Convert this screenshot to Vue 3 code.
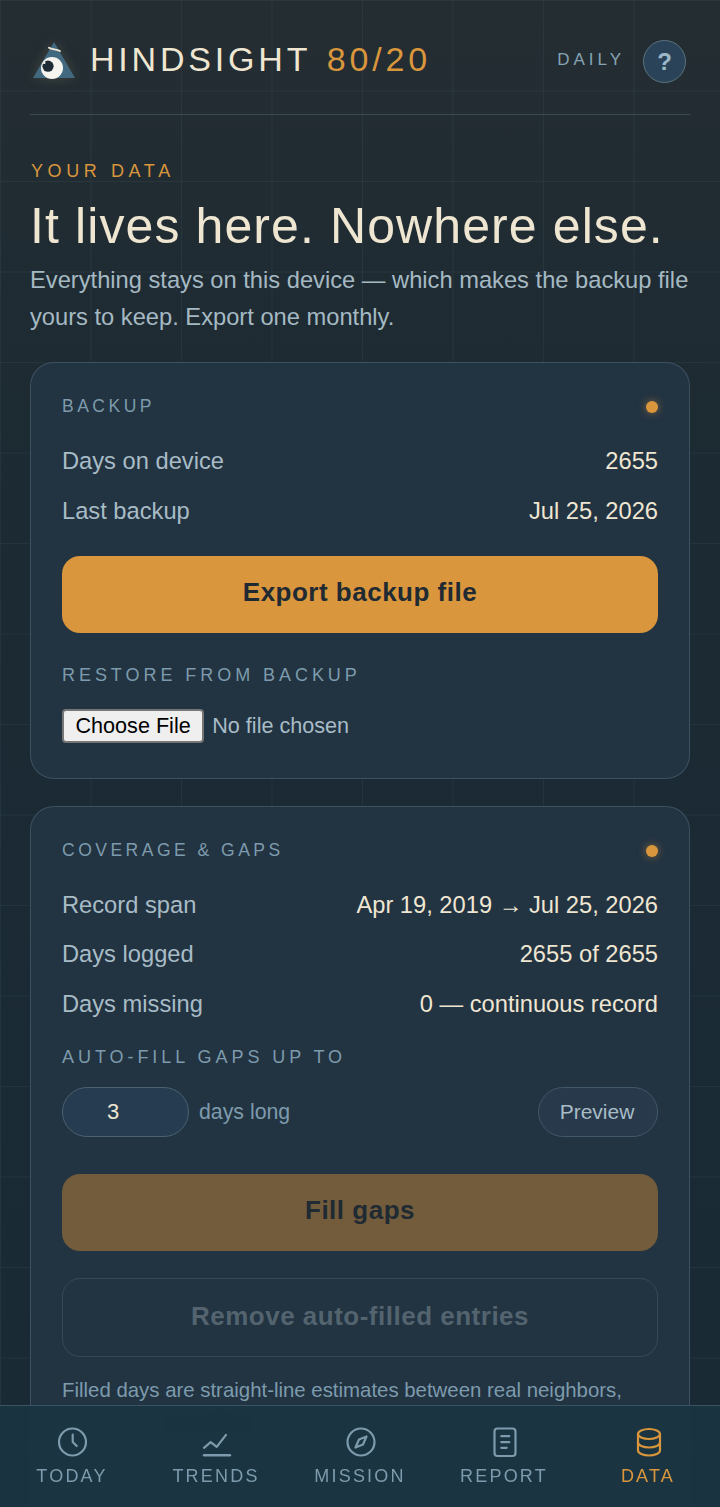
<script setup>
const navItems = [
  { label: 'TODAY', icon: 'clock' },
  { label: 'TRENDS', icon: 'trends' },
  { label: 'MISSION', icon: 'compass' },
  { label: 'REPORT', icon: 'report' },
  { label: 'DATA', icon: 'data', active: true },
]
</script>

<template>
  <div class="page">
    <header class="header">
      <div class="brand">
        <svg class="logo" width="48" height="40" viewBox="0 0 48 40">
          <path d="M24 1 L45 37 H3 Z" fill="#41697f" />
          <path d="M19 6.7 C21.5 8.8 26 8 30 10" stroke="#eee6d3" stroke-width="1.8" fill="none" stroke-linecap="round" />
          <circle cx="22" cy="27" r="11" fill="#f6f4ee" />
          <circle cx="18" cy="25.2" r="5.6" fill="#1f2c36" />
          <circle cx="14.2" cy="21.8" r="1.3" fill="#f6f4ee" />
        </svg>
        <span class="title">HINDSIGHT <em>80/20</em></span>
      </div>
      <div class="head-right">
        <span class="daily">DAILY</span>
        <span class="help">?</span>
      </div>
    </header>

    <section class="intro">
      <div class="eyebrow">YOUR DATA</div>
      <h1>It lives here. Nowhere else.</h1>
      <p>Everything stays on this device — which makes the backup file yours to keep. Export one monthly.</p>
    </section>

    <section class="card first">
      <div class="card-head"><span class="card-title">BACKUP</span><i class="dot"></i></div>
      <div class="row r1"><span>Days on device</span><b>2655</b></div>
      <div class="row r2"><span>Last backup</span><b>Jul 25, 2026</b></div>
      <button class="btn primary">Export backup file</button>
      <div class="sub-label restore">RESTORE FROM BACKUP</div>
      <input class="file" type="file" />
    </section>

    <section class="card second">
      <div class="card-head"><span class="card-title">COVERAGE &amp; GAPS</span><i class="dot"></i></div>
      <div class="row r1"><span>Record span</span><b>Apr 19, 2019 → Jul 25, 2026</b></div>
      <div class="row r3"><span>Days logged</span><b>2655 of 2655</b></div>
      <div class="row r2"><span>Days missing</span><b>0 — continuous record</b></div>
      <div class="sub-label autofill">AUTO-FILL GAPS UP TO</div>
      <div class="fill-row">
        <input class="num" type="text" value="3" />
        <span class="days">days long</span>
        <button class="preview">Preview</button>
      </div>
      <button class="btn primary dim">Fill gaps</button>
      <button class="btn ghost">Remove auto-filled entries</button>
      <p class="note">Filled days are straight-line estimates between real neighbors, <span class="note-soft">marked as </span><span class="note-dark">auto-filled</span></p>
    </section>

    <nav class="nav">
      <div v-for="item in navItems" :key="item.label" class="nav-item" :class="{ active: item.active }">
        <svg width="32" height="32" viewBox="0 0 32 32" fill="none" stroke="currentColor" stroke-width="2.2" stroke-linecap="round" stroke-linejoin="round">
          <template v-if="item.icon === 'clock'">
            <circle cx="16.5" cy="16" r="13.5" />
            <path d="M16.7 8.5 V16 L20.7 20" />
          </template>
          <template v-else-if="item.icon === 'trends'">
            <path d="M4 21.8 L10.7 16.2 L16.7 20.8 L26 8.8" />
            <path d="M4 29.2 H30" stroke-width="2.4" />
          </template>
          <template v-else-if="item.icon === 'compass'">
            <circle cx="17" cy="16" r="13.5" />
            <path d="M22.5 10.5 L19 18.5 L11.5 21.5 L15 13.5 Z" />
          </template>
          <template v-else-if="item.icon === 'report'">
            <rect x="6.5" y="2.5" width="21" height="27.5" rx="3" />
            <path d="M13.3 10.2 H21.3 M13.3 16.2 H21.3 M13.3 21.8 H18.7" />
          </template>
          <template v-else>
            <ellipse cx="17" cy="8" rx="11" ry="5" />
            <path d="M6 8 V24.5 C6 27.3 11 29.5 17 29.5 C23 29.5 28 27.3 28 24.5 V8" />
            <path d="M6 16.5 C6 19.3 11 21.5 17 21.5 C23 21.5 28 19.3 28 16.5" />
          </template>
        </svg>
        <span>{{ item.label }}</span>
      </div>
    </nav>
  </div>
</template>

<style>
html, body { margin: 0; background: #1d2a33; }
body { overflow: hidden; height: 1507px; }
</style>

<style scoped>
.page {
  box-sizing: border-box;
  width: 720px;
  height: 1507px;
  overflow: hidden;
  padding: 0 30px;
  position: relative;
  font-family: "Liberation Sans", Arial, sans-serif;
  background-color: #1c2932;
  background-image:
    linear-gradient(rgba(120,150,165,0.09) 1px, transparent 1px),
    linear-gradient(90deg, rgba(120,150,165,0.09) 1px, transparent 1px),
    linear-gradient(180deg, #242d32 0%, #1b2a33 35%, #1a2a35 100%);
  background-size: 90.5px 90.5px, 90.5px 90.5px, 100% 100%;
}
.header {
  display: flex;
  align-items: center;
  justify-content: space-between;
  height: 115px;
  box-sizing: border-box;
  border-bottom: 1px solid rgba(150,175,185,0.22);
  padding-top: 5px;
}
.brand { display: flex; align-items: center; gap: 12px; }
.logo { display: block; margin-top: 3px; filter: drop-shadow(0 0 6px rgba(217,190,130,0.18)); }
.title {
  font-size: 34px;
  letter-spacing: 3.8px;
  color: #efe6d2;
  white-space: pre;
}
.title em { font-style: normal; color: #d9963c; margin-left: 3px; }
.head-right { display: flex; align-items: center; gap: 18px; margin: 4px 4px 0 0; }
.daily { font-size: 17px; letter-spacing: 4px; color: #86a3b3; margin-bottom: 3px; }
.help {
  width: 41px; height: 41px; border-radius: 50%;
  display: flex; align-items: center; justify-content: center;
  background: #2a4358;
  border: 1.5px solid #5a7380;
  color: #9cb8c8;
  font-size: 24px;
  font-weight: 700;
}
.intro { padding-top: 46px; }
.eyebrow { font-size: 18px; letter-spacing: 4.6px; color: #d9963c; line-height: 21px; padding-left: 1px; }
.intro h1 {
  margin: 14px 0 0;
  font-size: 50px;
  font-weight: 400;
  letter-spacing: 1.1px;
  line-height: 60px;
  color: #efe6d2;
  white-space: nowrap;
}
.intro p {
  margin: 6px 0 0;
  font-size: 23.7px;
  line-height: 37px;
  color: #a5b9c3;
}
.card {
  box-sizing: border-box;
  margin-top: 27px;
  padding: 30px 31px 0;
  border: 1.5px solid rgba(130,160,175,0.28);
  border-radius: 24px;
  background: #223342;
  height: 417px;
}
.first { margin-top: 26px; }
.second { height: 800px; }
.card-head { display: flex; align-items: center; justify-content: space-between; height: 26px; }
.card-title { font-size: 17.5px; letter-spacing: 3.5px; color: #7d9bac; }
.dot {
  width: 12px; height: 12px; border-radius: 50%;
  background: #d9963c;
  box-shadow: 0 0 8px rgba(217,150,60,0.55);
  margin-top: 2px;
}
.row { display: flex; justify-content: space-between; font-size: 23.7px; line-height: 30px; color: #a8bcc6; }
.row b { font-weight: 400; color: #efe6d2; }
.r1 { margin-top: 27px; }
.r2 { margin-top: 20px; }
.r3 { margin-top: 19px; }
.btn {
  display: block;
  box-sizing: border-box;
  width: 100%;
  height: 77px;
  padding: 0 0 4px;
  border-radius: 18px;
  font-family: inherit;
  font-size: 26px;
  font-weight: 700;
  letter-spacing: 0.5px;
  cursor: pointer;
}
.primary { background: #d9963c; border: none; color: #1f2a33; margin-top: 30px; }
.dim { background: #725c3c; color: #1f2a33; margin-top: 37px; }
.ghost {
  margin-top: 27px;
  height: 79px;
  padding-bottom: 2px;
  background: transparent;
  border: 1.5px solid rgba(130,160,175,0.2);
  color: #53646f;
}
.sub-label { font-size: 18px; letter-spacing: 3.95px; color: #7d9bac; line-height: 21px; }
.restore { margin-top: 32px; }
.autofill { margin-top: 28px; }
.file {
  display: block;
  margin-top: 23px;
  font-family: inherit;
  font-size: 21.6px;
  color: #a8bcc6;
  width: 100%;
}
.file::file-selector-button {
  font: inherit;
  color: #000;
  background: #efefef;
  border: 2px solid #767676;
  border-radius: 4px;
  padding: 2px 11.5px;
  margin-right: 8px;
  height: 34px;
}
.fill-row { display: flex; align-items: center; margin-top: 19px; }
.num {
  box-sizing: border-box;
  width: 127px; height: 50px;
  border-radius: 25px;
  background: #263c50;
  border: 1.5px solid #4a6272;
  color: #efe6d2;
  font-family: inherit;
  font-size: 22px;
  padding: 0 0 0 44px;
}
.days { margin-left: 10px; font-size: 21.3px; color: #7d9bac; }
.preview {
  margin-left: auto;
  box-sizing: border-box;
  width: 120px; height: 50px;
  padding: 0 2px 0 0;
  border-radius: 25px;
  background: #27394a;
  border: 1.5px solid #40586a;
  color: #a8bcc6;
  font-family: inherit;
  font-size: 21px;
}
.note { margin: 17px 0 0; font-size: 20.4px; line-height: 32px; color: #7d9bac; }
.note-soft { color: #223342; }
.note-dark { color: #0d1a22; }
.nav {
  position: absolute;
  left: 0; right: 0; bottom: 0;
  height: 102px;
  box-sizing: border-box;
  display: flex;
  padding-top: 20px;
  border-top: 1.5px solid rgba(130,160,175,0.3);
  background: rgba(26,52,65,0.94);
  backdrop-filter: blur(6px);
}
.nav-item {
  flex: 1;
  display: flex;
  flex-direction: column;
  align-items: center;
  gap: 8px;
  color: #7d9bac;
  font-size: 18px;
  letter-spacing: 2.2px;
}
.nav-item svg { display: block; }
.nav-item.active { color: #d9963c; }
</style>
